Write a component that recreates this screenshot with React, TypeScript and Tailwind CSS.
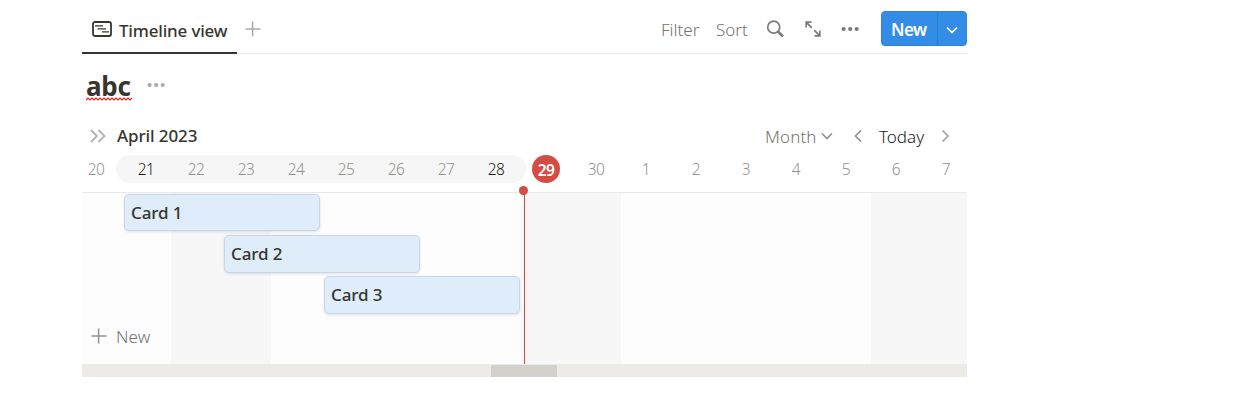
import type { ReactNode } from "react";

const days = ["20", "21", "22", "23", "24", "25", "26", "27", "28", "29", "30", "1", "2", "3", "4", "5", "6", "7"];

const cards = [
  { title: "Card 1", place: "ml-[42px] h-[37px] mb-[4px]" },
  { title: "Card 2", place: "ml-[142px] h-[38px] mb-[3px]" },
  { title: "Card 3", place: "ml-[242px] h-[38px]" },
];

function Plus({ className }: { className: string }) {
  return (
    <svg viewBox="0 0 16 16" className={className} fill="none" stroke="currentColor" strokeWidth="1.5">
      <path d="M7.600 .5v15M.5 8h15" />
    </svg>
  );
}

function Dots({ className }: { className: string }) {
  return (
    <svg viewBox="0 0 18 6" className={className} fill="currentColor">
      <circle cx="2.600" cy="3" r="2.1" />
      <circle cx="9.200" cy="3" r="2.1" />
      <circle cx="15.700" cy="3" r="2.1" />
    </svg>
  );
}

function Chevron({ d, className }: { d: string; className: string }) {
  return (
    <svg viewBox="0 0 12 12" className={className} fill="none" stroke="currentColor" strokeWidth="1.7">
      <path d={d} />
    </svg>
  );
}

function Day({ label }: { label: string }) {
  let tone: ReactNode = <span className="font-light text-[#92918e]">{label}</span>;
  if (label === "29") {
    tone = (
      <span className="flex size-[28px] items-center justify-center rounded-full bg-[#d44c43] pt-px font-semibold text-white">
        {label}
      </span>
    );
  } else if (label === "21" || label === "28") {
    tone = <span className="font-light text-[#1c1b18]">{label}</span>;
  }
  return <div className="flex w-[50px] shrink-0 items-center justify-center">{tone}</div>;
}

export default function App() {
  return (
    <div className="h-[412px] w-full overflow-hidden bg-white pl-[82px] font-['Noto_Sans','Open_Sans',sans-serif] text-[17px] leading-6 text-[#37352f]">
      <div className="w-[885px]">
        <header className="flex h-[54px] items-start border-b border-[#e9e9e8]">
          <div className="flex h-[54px] w-[155px] shrink-0 border-b-2 border-[#37352f] pt-[18px] pl-[10px]">
            <svg viewBox="0 0 20 16" className="mt-[3px] h-4 w-5 shrink-0" fill="none" stroke="currentColor">
              <rect x="1" y="1" width="18" height="14" rx="2" strokeWidth="1.8" />
              <path d="M3 4.900h8M5.500 7.800h8.500M10 10.900h7" strokeWidth="1.3" />
            </svg>
            <span className="mt-px ml-[7px] whitespace-nowrap font-medium tracking-[-0.18px]">Timeline view</span>
          </div>
          <Plus className="mt-[21px] ml-[8px] size-4 text-[#aaa9a6]" />
          <div className="ml-auto flex h-[54px] font-light text-[#73726e]">
            <span className="mt-[18px] w-[55px]">Filter</span>
            <span className="mt-[18px] w-[50px]">Sort</span>
            <svg viewBox="0 0 18 18" className="mt-[20px] h-[18px] w-[18px] text-[#7b7a77]" fill="none" stroke="currentColor">
              <circle cx="7.700" cy="7.2" r="6" strokeWidth="1.7" />
              <path d="M12 11.5l5 5" strokeWidth="2.5" />
            </svg>
            <svg viewBox="0 0 16 16" className="mt-[21px] ml-[21px] size-4 text-[#7b7a77]" fill="none" stroke="currentColor" strokeWidth="1.7">
              <path d="M1.200 6.500V1.200h5.300M1.200 1.200l5.600 5.600M14.800 9.500v5.300H9.500M14.800 14.800l-5.600-5.600" />
            </svg>
            <Dots className="mt-[26px] ml-[20px] h-[6px] w-[18px] text-[#7b7a77]" />
            <div className="mt-[11px] ml-[22px] flex h-[35px] w-[86px] overflow-hidden rounded-[4px] border border-[#2f83d7] bg-[#338ce6] text-white">
              <span className="w-[56px] shrink-0 border-r border-[#2b7ccb] pt-[6px] pl-[9px] font-semibold tracking-[-0.5px]">New</span>
              <Chevron d="M1 3.500l5 5 5-5" className="mt-[12px] ml-[8px] size-3" />
            </div>
          </div>
        </header>

        <div className="flex h-[64px] pt-[16px] pl-[4px]">
          <h1 className="relative h-[32px] w-[46px] text-[26px] leading-[32px] font-bold tracking-[-0.2px]">
            abc
            <svg viewBox="0 0 46 4" className="absolute top-[27px] left-0 h-1 w-[46px]" fill="none" stroke="#ee1c1c" strokeWidth="1.2">
              <path d="M0 3l2-2 2 2 2-2 2 2 2-2 2 2 2-2 2 2 2-2 2 2 2-2 2 2 2-2 2 2 2-2 2 2 2-2 2 2 2-2 2 2 2-2 2 2 2-2" />
            </svg>
          </h1>
          <Dots className="mt-[12px] ml-[15px] h-[6px] w-[18px] text-[#aaa9a6]" />
        </div>

        <div className="flex h-[37px] items-center pb-[2px]">
          <svg viewBox="0 0 16 14" className="ml-[8px] h-[14px] w-4 text-[#b3b2af]" fill="none" stroke="currentColor" strokeWidth="1.8">
            <path d="M1 1l6 6-6 6M8.500 1l6 6-6 6" />
          </svg>
          <span className="ml-[11px] font-medium tracking-[-0.1px]">April 2023</span>
          <div className="ml-auto flex h-[35px] w-[202px] items-center">
            <span className="w-[56px] pt-[2px] font-light tracking-[0.15px] text-[#73726e]">Month</span>
            <Chevron d="M1 3.500l5 5 5-5" className="size-3 shrink-0 text-[#92918e]" />
            <Chevron d="M9 .500L3.500 6 9 11.500" className="ml-[19px] size-3 shrink-0 text-[#92918e]" />
            <span className="ml-[15px] w-[60px] pt-[2px] font-light text-[#1c1b18]">Today</span>
            <Chevron d="M3.500 .500L9 6 3.500 11.500" className="size-3 shrink-0 text-[#a5a4a1]" />
          </div>
        </div>

        <div className="grid h-[38px] w-full overflow-hidden border-b border-[#e9e9e8] text-[15.5px] tracking-[-0.5px]">
          <div className="col-start-1 row-start-1 ml-[34px] h-[28px] w-[410px] rounded-full bg-[#f6f6f6]" />
          <div className="z-10 col-start-1 row-start-1 -ml-[11px] flex h-[28px]">
            {days.map((d) => (
              <Day key={d} label={d} />
            ))}
          </div>
        </div>

        <main className="relative h-[171px] bg-[#fdfdfd]">
          <div className="absolute inset-0 flex">
            <div className="ml-[89px] w-[100px] bg-[#f7f7f7]" />
            <div className="ml-[250px] w-[100px] bg-[#f7f7f7]" />
            <div className="ml-[250px] flex-1 bg-[#f7f7f7]" />
          </div>
          <div className="relative pt-px">
            {cards.map((c) => (
              <div
                key={c.title}
                className={`${c.place} flex w-[196px] items-center rounded-[5px] border border-[#c6d8e8] bg-[#dfecfa] pl-[6px] font-medium tracking-[-0.1px] shadow-[0_1px_3px_rgba(0,0,0,0.12)]`}
              >
                {c.title}
              </div>
            ))}
            <div className="mt-[10px] flex h-6 items-center pl-[9px] font-light text-[#73726e]">
              <Plus className="size-4 text-[#92918e]" />
              <span className="ml-[9px] pt-px tracking-[0.2px]">New</span>
            </div>
          </div>
          <div className="absolute top-0 bottom-0 left-[442px] w-px bg-[#d9493f]" />
          <div className="absolute top-[-7px] left-[437px] size-[9px] rounded-full bg-[#d44c43]" />
        </main>

        <div className="h-[13px] bg-[#ecebe7] pt-px pl-[409px]">
          <div className="h-[12px] w-[66px] bg-[#d3d1cb]" />
        </div>
      </div>
    </div>
  );
}
